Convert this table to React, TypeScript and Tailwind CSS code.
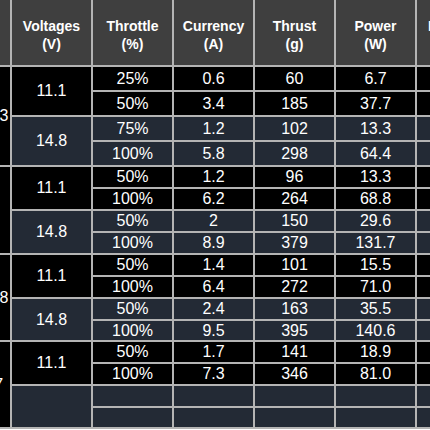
import React from "react"

type Block = { volts: string; slate: boolean; rows: string[][] }
type Group = { motor: string; blocks: Block[] }

const groups: Group[] = [
  {
    motor: "BE2213",
    blocks: [
      { volts: "11.1", slate: false, rows: [["25%", "0.6", "60", "6.7"], ["50%", "3.4", "185", "37.7"]] },
      { volts: "14.8", slate: true, rows: [["75%", "1.2", "102", "13.3"], ["100%", "5.8", "298", "64.4"]] },
    ],
  },
  {
    motor: "2212",
    blocks: [
      { volts: "11.1", slate: false, rows: [["50%", "1.2", "96", "13.3"], ["100%", "6.2", "264", "68.8"]] },
      { volts: "14.8", slate: true, rows: [["50%", "2", "150", "29.6"], ["100%", "8.9", "379", "131.7"]] },
    ],
  },
  {
    motor: "BE2808",
    blocks: [
      { volts: "11.1", slate: false, rows: [["50%", "1.4", "101", "15.5"], ["100%", "6.4", "272", "71.0"]] },
      { volts: "14.8", slate: true, rows: [["50%", "2.4", "163", "35.5"], ["100%", "9.5", "395", "140.6"]] },
    ],
  },
  {
    motor: "A2217",
    blocks: [
      { volts: "11.1", slate: false, rows: [["50%", "1.7", "141", "18.9"], ["100%", "7.3", "346", "81.0"]] },
      { volts: "", slate: true, rows: [["", "", "", ""], ["", "", "", ""]] },
    ],
  },
]

const headers = [
  ["Motor", ""],
  ["Voltages", "(V)"],
  ["Throttle", "(%)"],
  ["Currency", "(A)"],
  ["Thrust", "(g)"],
  ["Power", "(W)"],
  ["Efficiency", "(g/W)"],
]

function efficiency(thrust: string, power: string) {
  if (!thrust || !power) return ""
  return (parseFloat(thrust) / parseFloat(power)).toFixed(2)
}

export default function App() {
  return (
    <div className="w-[430px] h-[430px] overflow-hidden bg-white">
      <div
        className="-ml-[52px] -mt-[2px] w-max p-[2px] bg-[#b4b4b4] grid gap-[2px] grid-cols-[60px_repeat(5,79px)_88px] grid-rows-[65px_repeat(4,23px)_repeat(7,20px)_19px_repeat(3,20px)_19px] text-white"
        style={{ fontFamily: '"Liberation Sans", Arial, sans-serif' }}
      >
        {/* Header */}
        {headers.map(([title, unit]) => (
          <div
            key={title}
            className="bg-[#3f3f3f] flex flex-col items-center justify-center pt-[5px] text-[14px] leading-[18px] font-bold"
          >
            <span>{title}</span>
            {unit && <span>{unit}</span>}
          </div>
        ))}

        {/* Body */}
        {groups.map((group) => (
          <React.Fragment key={group.motor}>
            <div className="row-span-4 bg-black flex items-center justify-center text-[16px]">{group.motor}</div>
            {group.blocks.map((block, bi) =>
              block.rows.map((row, ri) => {
                const bg = block.slate ? "bg-[#232a35]" : "bg-black"
                return (
                  <React.Fragment key={`${bi}-${ri}`}>
                    {ri === 0 && (
                      <div className={`row-span-2 ${bg} flex items-center justify-center text-[16px]`}>{block.volts}</div>
                    )}
                    {[...row, efficiency(row[2], row[3])].map((cell, ci) => (
                      <div key={ci} className={`${bg} flex items-center justify-center text-[16px] leading-none`}>
                        {cell}
                      </div>
                    ))}
                  </React.Fragment>
                )
              })
            )}
          </React.Fragment>
        ))}
      </div>
    </div>
  )
}
